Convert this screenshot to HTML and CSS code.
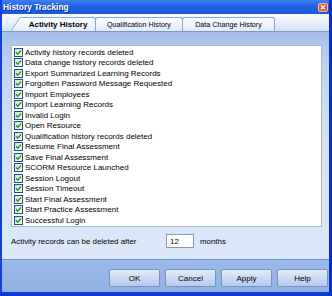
FILE: index.html
```html
<!DOCTYPE html>
<html lang="en">
<head>
  <meta charset="UTF-8" />
  <title>History Tracking</title>
  <link rel="stylesheet" href="styles.css">
</head>
<body>
  <div class="window">
    <div class="title-bar">
      <span class="title-text">History Tracking</span>
      <svg class="close-btn" width="10" height="9" viewBox="0 0 10 9">
        <rect x="0.5" y="0.5" width="9" height="8" rx="1.5" fill="#e1582f" stroke="#f3b9a4" />
        <path d="M3 2.2 L7 6.2 M7 2.2 L3 6.2" stroke="#ffffff" stroke-width="1.3" />
      </svg>
    </div>

    <div class="tab-strip">
      <div class="tab tab-active">
        <svg class="tab-slant" width="10" height="14" viewBox="0 0 10 14">
          <defs>
            <linearGradient id="tabFill" x1="0" y1="0" x2="0" y2="1">
              <stop offset="0" stop-color="#fdfeff" />
              <stop offset="1" stop-color="#e6eefa" />
            </linearGradient>
          </defs>
          <path d="M0 14 L8 2 Q9.3 0.5 10 0.5 L10 14 Z" fill="url(#tabFill)" />
          <path d="M0 14 L8 2 Q9.3 0.5 10 0.5" fill="none" stroke="#8ea6cb" />
        </svg>
        <span class="tab-label">Activity History</span>
      </div>
      <div class="tab tab-plain tab-qual">Qualification History</div>
      <div class="tab tab-plain tab-data">Data Change History</div>
    </div>

    <div class="panel">
      <ul class="check-list">
        <li><span class="check"></span>Activity history records deleted</li>
        <li><span class="check"></span>Data change history records deleted</li>
        <li><span class="check"></span>Export Summarized Learning Records</li>
        <li><span class="check"></span>Forgotten Password Message Requested</li>
        <li><span class="check"></span>Import Employees</li>
        <li><span class="check"></span>Import Learning Records</li>
        <li><span class="check"></span>Invalid Login</li>
        <li><span class="check"></span>Open Resource</li>
        <li><span class="check"></span>Qualification history records deleted</li>
        <li><span class="check"></span>Resume Final Assessment</li>
        <li><span class="check"></span>Save Final Assessment</li>
        <li><span class="check"></span>SCORM Resource Launched</li>
        <li><span class="check"></span>Session Logout</li>
        <li><span class="check"></span>Session Timeout</li>
        <li><span class="check"></span>Start Final Assessment</li>
        <li><span class="check"></span>Start Practice Assessment</li>
        <li><span class="check"></span>Successful Login</li>
      </ul>

      <div class="retention-row">
        <span class="retention-label">Activity records can be deleted after</span>
        <input class="retention-input" type="text" value="12" />
        <span class="retention-unit">months</span>
      </div>
    </div>

    <div class="button-bar">
      <button class="dlg-btn">OK</button>
      <button class="dlg-btn">Cancel</button>
      <button class="dlg-btn">Apply</button>
      <button class="dlg-btn">Help</button>
    </div>
  </div>
</body>
</html>
```

FILE: styles.css
```css
* {
  margin: 0;
  padding: 0;
  box-sizing: border-box;
}
html, body {
  width: 332px;
  height: 296px;
  overflow: hidden;
  font-family: 'Liberation Sans', Arial, sans-serif;
  background: #0b3fd6;
}
.window {
  width: 332px;
  height: 296px;
  display: flex;
  flex-direction: column;
  border-left: 2px solid #0d43dc;
  border-right: 3px solid #0831c8;
  border-bottom: 4px solid #0a3ad4;
}
.title-bar {
  height: 14px;
  display: flex;
  align-items: center;
  justify-content: space-between;
  padding-left: 1px;
  padding-right: 1px;
  background: linear-gradient(#3d80f2, #2262e4 45%, #1a58dc);
}
.title-text {
  color: #ffffff;
  font-weight: bold;
  font-size: 8.4px;
  text-shadow: 1px 1px 0 #0c2f8e;
}
.close-btn {
  display: block;
}
.tab-strip {
  height: 18px;
  display: flex;
  align-items: flex-end;
  padding-left: 9px;
  border-bottom: 1px solid #7b97c3;
  background: linear-gradient(#f8fbff, #e4edfa 60%, #d3e1f6);
}
.tab {
  height: 14px;
  display: flex;
  align-items: center;
  justify-content: center;
  color: #000;
  white-space: nowrap;
}
.tab-active {
  height: 14px;
  align-items: stretch;
}
.tab-slant {
  display: block;
}
.tab-label {
  width: 75px;
  display: flex;
  align-items: center;
  justify-content: center;
  font-weight: bold;
  font-size: 8px;
  border-top: 1px solid #8ea6cb;
  border-right: 1px solid #8ea6cb;
  border-top-right-radius: 3px;
  background: linear-gradient(#fdfeff, #e6eefa);
}
.tab-plain {
  font-size: 7.2px;
  border: 1px solid #8ea6cb;
  border-bottom: none;
  border-radius: 3px 3px 0 0;
  background: linear-gradient(#fbfcff, #e2ebf9);
  margin-left: -1px;
}
.tab-qual {
  width: 88px;
}
.tab-data {
  width: 93px;
}
.panel {
  height: 227px;
  padding: 13px 7px 0 9px;
  background: linear-gradient(#a3bfec 0, #bcd1f2 14%, #d2e1f7 45%, #dde9f9 100%);
}
.check-list {
  list-style: none;
  height: 182px;
  background: #ffffff;
  border: 1px solid #a8b8d0;
  padding: 1px 0 0 2px;
}
.check-list li {
  height: 10.5px;
  display: flex;
  align-items: center;
  font-size: 8px;
  color: #000;
  white-space: nowrap;
}
.check {
  width: 9px;
  height: 9px;
  margin-right: 2px;
  flex-shrink: 0;
  border: 1px solid #1c5180;
  background:
    url("data:image/svg+xml,%3Csvg xmlns='http://www.w3.org/2000/svg' width='7' height='7' viewBox='0 0 7 7'%3E%3Cpath d='M1 3.4 L2.8 5.2 L6 1.6' fill='none' stroke='%2321a121' stroke-width='1.5'/%3E%3C/svg%3E") no-repeat center,
    linear-gradient(135deg, #dcdcd7, #ffffff);
}
.retention-row {
  margin-top: 7px;
  height: 14px;
  display: flex;
  align-items: center;
  font-size: 7.9px;
  color: #000;
}
.retention-label {
  width: 155px;
  padding-left: 0;
}
.retention-input {
  width: 28px;
  height: 14px;
  border: 1px solid #7f9db9;
  background: #ffffff;
  font-family: 'Liberation Sans', Arial, sans-serif;
  font-size: 8px;
  padding-left: 3px;
  color: #000;
}
.retention-unit {
  margin-left: 6px;
}
.button-bar {
  height: 33px;
  display: flex;
  justify-content: flex-end;
  align-items: flex-start;
  gap: 5px;
  padding-top: 9px;
  padding-right: 1px;
  border-top: 1px solid #6b8cc2;
  background: linear-gradient(#9bb9e9, #92b1e4);
}
.dlg-btn {
  width: 51px;
  height: 18px;
  font-family: 'Liberation Sans', Arial, sans-serif;
  font-size: 8px;
  color: #000;
  border: 1px solid #7a93bd;
  border-radius: 2px;
  background: linear-gradient(#e3ecf9, #c8d9f2 55%, #b6cbec);
}
```
